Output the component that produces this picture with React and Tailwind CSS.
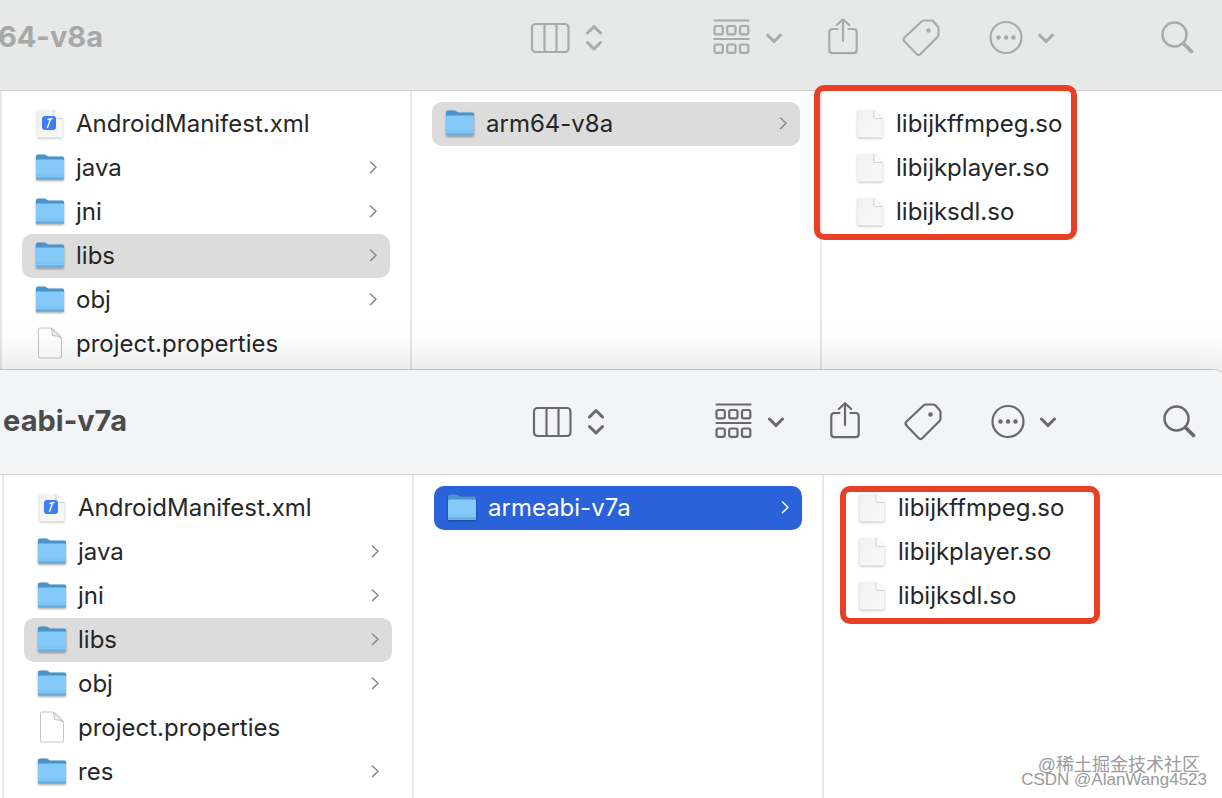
import { clsx } from 'clsx';

const FONT = "font-['Inter','Liberation_Sans',sans-serif]";

const PROJECT_FILES = [
  { name: 'AndroidManifest.xml', kind: 'xml' },
  { name: 'java', kind: 'folder' },
  { name: 'jni', kind: 'folder' },
  { name: 'libs', kind: 'folder', selected: true },
  { name: 'obj', kind: 'folder' },
  { name: 'project.properties', kind: 'plain' },
];

const SO_FILES = [
  { name: 'libijkffmpeg.so', kind: 'doc' },
  { name: 'libijkplayer.so', kind: 'doc' },
  { name: 'libijksdl.so', kind: 'doc' },
];

export default function App() {
  return (
    <main className={`relative flex min-h-screen flex-col overflow-hidden bg-white text-[24px] text-[#262626] ${FONT}`}>
      {/* background window, its toolbar runs off the top of the screen */}
      <section aria-label="arm64-v8a" className="-mt-3.5">
        <Toolbar
          title="arm64-v8a"
          className="border-[#d0d1d1] bg-[#e7e8e8] pr-7 text-[#a9aaaa]"
          titleClass="w-[103px] text-[#a7a8a8]"
        />
        <div className="flex">
          <Column items={PROJECT_FILES} />
          <Column items={[{ name: 'arm64-v8a', kind: 'folder', selected: true }]} />
          <Column items={SO_FILES} last>
            <Highlight className="-left-2 -top-1.5 h-[155px] w-[263px]" />
          </Column>
        </div>
      </section>

      {/* front window */}
      <section
        aria-label="armeabi-v7a"
        className="relative -mr-2.5 flex flex-1 flex-col overflow-clip rounded-tr-[20px] border-t border-[#bdbebe] bg-white shadow-[0_40px_50px_40px_rgba(0,0,0,0.15)]"
      >
        <Toolbar
          title="armeabi-v7a"
          className="border-[#cfcfd0] bg-[#f3f4f6] pl-0.5 pr-9 text-[#69696b]"
          titleClass="w-[125px] text-[#4b4b4c]"
        />
        <div className="flex flex-1 pl-0.5">
          <Column items={[...PROJECT_FILES, { name: 'res', kind: 'folder' }]} />
          <Column items={[{ name: 'armeabi-v7a', kind: 'folder', active: true }]} />
          <Column items={SO_FILES} last>
            <Highlight className="left-4 top-[11px] h-[138px] w-[260px]" />
          </Column>
        </div>
      </section>

      <Watermark />
    </main>
  );
}

function Toolbar({ title, className, titleClass }) {
  return (
    <header className={clsx('flex h-[105px] items-center border-b', className)}>
      <div className="w-[530px] shrink-0">
        <h1 className={clsx('flex justify-end overflow-hidden whitespace-nowrap pb-0.5 text-[29px] leading-10 font-bold', titleClass)}>
          {title}
        </h1>
      </div>
      <button aria-label="View" className="flex items-center gap-4">
        <ColumnsIcon />
        <UpDownIcon />
      </button>
      <button aria-label="Group" className="ml-[110px] flex items-center gap-4">
        <GroupIcon />
        <ChevronDown />
      </button>
      <button aria-label="Share" className="ml-[46px]">
        <ShareIcon />
      </button>
      <button aria-label="Tags" className="ml-11">
        <TagIcon />
      </button>
      <button aria-label="More" className="ml-12 flex items-center gap-3.5">
        <MoreIcon />
        <ChevronDown />
      </button>
      <button aria-label="Search" className="ml-auto">
        <SearchIcon />
      </button>
    </header>
  );
}

function Column({ items, last, children }) {
  return (
    <div className={clsx('relative border-l-2 border-[#e8e8e8] px-5 pt-[11px] pb-[3px]', last ? 'flex-1' : 'w-[410px] shrink-0')}>
      <ul>
        {items.map((item) => (
          <Row key={item.name} {...item} />
        ))}
      </ul>
      {children}
    </div>
  );
}

function Row({ name, kind, selected, active }) {
  return (
    <li
      className={clsx(
        'flex h-11 items-center rounded-[10px] px-[13px]',
        selected && 'bg-[#dcdcdc]',
        active && 'bg-[#2962d9] text-white',
      )}
    >
      <span className="mr-[11px] flex w-[30px] shrink-0 justify-center">
        {kind === 'folder' ? <FolderIcon /> : <FileIcon kind={kind} />}
      </span>
      <span className="flex-1 whitespace-nowrap leading-8">{name}</span>
      {kind === 'folder' && (
        <svg width="8" height="16" viewBox="0 0 8 16" fill="none" className={active ? 'text-white' : 'text-[#8a8a8a]'}>
          <path d="M1.500 2 7 7.300 1.500 12.600" stroke="currentColor" strokeWidth="1.500" strokeLinecap="round" strokeLinejoin="round" />
        </svg>
      )}
    </li>
  );
}

// red annotation frame drawn over the columns
function Highlight({ className }) {
  return <div className={clsx('pointer-events-none absolute z-10 rounded-[10px] border-6 border-[#e93f26]', className)} />;
}

function Watermark() {
  return (
    <div className="absolute right-[15px] bottom-2 flex flex-col items-end font-['Liberation_Sans','Noto_Sans_CJK_SC',sans-serif] text-[#9a9a9a]">
      <span className="mr-[7px] text-[18px] leading-[10px]">@稀土掘金技术社区</span>
      <span className="text-[17px] leading-5">CSDN @AlanWang4523</span>
    </div>
  );
}

function FolderIcon() {
  return (
    <svg width="30" height="30" viewBox="0 0 30 30" className="drop-shadow-[0_1px_1px_rgba(0,0,0,0.35)]">
      <path d="M1 3.500Q1 1.500 3 1.500H9Q10.500 1.500 11.500 2.500L13 3.500H27.500Q29 3.500 29 5V12H1Z" fill="#4a94cd" />
      <path d="M1 8Q1 6.500 2.500 6.500H27.500Q29 6.500 29 8V25.500Q29 27 27.500 27H2.500Q1 27 1 25.500Z" fill="#84c9f8" />
      <path d="M1 24H29V25.500Q29 27 27.500 27H2.500Q1 27 1 25.500Z" fill="#69b1e3" />
      <path d="M1 22H29" stroke="#74bbec" strokeWidth="0.800" />
    </svg>
  );
}

function FileIcon({ kind }) {
  if (kind === 'plain') {
    return (
      <svg width="26" height="34" viewBox="0 0 26 34">
        <path d="M1.500 2.500Q1.500 1 3 1H13.500Q16 1.500 18 3.500L22.500 8Q24.500 10 24.500 12.500V29.500Q24.500 31 23 31H3Q1.500 31 1.500 29.500Z" fill="#fff" stroke="#c4c4c4" />
        <path d="M14 1.500Q15.500 3 15.500 8.500Q21 8.500 24 11Z" fill="#f4f4f4" stroke="#c4c4c4" />
      </svg>
    );
  }
  return (
    <svg width="26" height="30" viewBox="0 0 26 30" className="drop-shadow-[0_1px_1px_rgba(0,0,0,0.25)]">
      <defs>
        <linearGradient id="page" x1="0" y1="0" x2="1" y2="1">
          <stop offset="0" stopColor="#f1f1f1" />
          <stop offset="1" stopColor="#f9f9f9" />
        </linearGradient>
      </defs>
      <path d="M0.500 2.500Q0.500 1 2 1H17L25.500 9.500V27Q25.500 28.500 24 28.500H2Q0.500 28.500 0.500 27Z" fill="url(#page)" />
      <path d="M17 1V8Q17 9.500 18.500 9.500H25.500Z" fill="#fdfdfd" />
      <path d="M17 1V8Q17 9.500 18.500 9.500H25.500" fill="none" stroke="#c6c6c6" strokeWidth="0.800" />
      {kind === 'xml' && (
        <>
          <rect x="5" y="7" width="14" height="14" rx="3" fill="#3a7df6" />
          <path d="M13.500 10 10.500 18.500M11 10.500 15 9.500" stroke="#fff" strokeWidth="1.400" strokeLinecap="round" />
        </>
      )}
    </svg>
  );
}

function ColumnsIcon() {
  return (
    <svg width="40" height="32" viewBox="0 0 40 32" fill="none" stroke="currentColor" strokeWidth="2.200">
      <rect x="2" y="2" width="36.500" height="28" rx="3.500" />
      <path d="M14.500 2V30M26.500 2V30" />
    </svg>
  );
}

function UpDownIcon() {
  return (
    <svg width="16" height="28" viewBox="0 0 16 28" fill="none" stroke="currentColor" strokeWidth="3" strokeLinecap="round" strokeLinejoin="round">
      <path d="M1.500 9 8 2.500 14.500 9M1.500 18.500 8 25 14.500 18.500" />
    </svg>
  );
}

function GroupIcon() {
  return (
    <svg width="38" height="38" viewBox="0 0 38 38" fill="none" stroke="currentColor" strokeWidth="2.200" strokeLinecap="round">
      <path d="M2.500 1.500H36.500M2.500 20H36.500" />
      {[7, 25.5].map((y) =>
        [2.5, 15.2, 28].map((x) => <rect key={`${x}-${y}`} x={x} y={y} width="8.300" height="8.300" rx="1.800" />),
      )}
    </svg>
  );
}

function ChevronDown() {
  return (
    <svg width="16" height="12" viewBox="0 0 16 12" fill="none" stroke="currentColor" strokeWidth="3" strokeLinecap="round" strokeLinejoin="round">
      <path d="M1.500 3 8 9.500 14.500 3" />
    </svg>
  );
}

function ShareIcon() {
  return (
    <svg width="30" height="40" viewBox="0 0 30 40" fill="none" stroke="currentColor" strokeWidth="2.200" strokeLinecap="round" strokeLinejoin="round">
      <path d="M9.500 11H4.500Q1.300 11 1.300 14.200V32Q1.300 35.200 4.500 35.200H25.500Q28.700 35.200 28.700 32V14.200Q28.700 11 25.500 11H20.500" />
      <path d="M15 23V1.500M8.800 7 15 1.200 21.200 7" />
    </svg>
  );
}

function TagIcon() {
  return (
    <svg width="38" height="38" viewBox="0 0 38 38" fill="none" stroke="currentColor" strokeWidth="2.200" strokeLinejoin="round">
      <path d="M19.500 2.500Q20.500 1.500 22 1.500H29Q30.500 1.500 31.500 2.500L35.500 7Q36.500 8 36.500 9.500V15.500Q36.500 17 35.500 18L18.500 35Q16.500 37 14.500 35L2.500 22.500Q0.500 20.500 2.500 18.500Z" />
      <circle cx="26.500" cy="11.500" r="2.200" fill="currentColor" stroke="none" />
    </svg>
  );
}

function MoreIcon() {
  return (
    <svg width="36" height="36" viewBox="0 0 36 36" fill="none" stroke="currentColor" strokeWidth="2.200">
      <circle cx="18" cy="17.500" r="15.500" />
      <g fill="currentColor" stroke="none">
        <circle cx="10.500" cy="17.500" r="2.200" />
        <circle cx="18" cy="17.500" r="2.200" />
        <circle cx="25.500" cy="17.500" r="2.200" />
      </g>
    </svg>
  );
}

function SearchIcon() {
  return (
    <svg width="34" height="34" viewBox="0 0 34 34" fill="none" stroke="currentColor" strokeLinecap="round">
      <circle cx="14.500" cy="13.500" r="12" strokeWidth="2.500" />
      <path d="M23.500 22.500 31.500 30.500" strokeWidth="3.800" />
    </svg>
  );
}
